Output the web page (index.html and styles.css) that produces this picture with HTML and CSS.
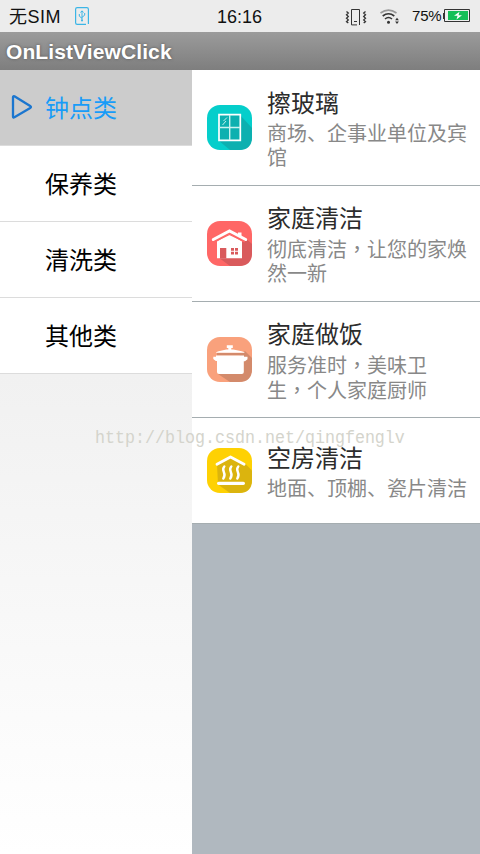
FILE: index.html
```
<!DOCTYPE html>
<html lang="zh-CN">
<head>
<meta charset="utf-8">
<title>OnListViewClick</title>
<link rel="stylesheet" href="styles.css">
</head>
<body>
<header class="status">
  <span class="carrier">无SIM</span>
  <svg class="usb" width="14" height="18" viewBox="0 0 14 18" fill="none" stroke="#3bb5e6"><path stroke-width="1.200" d="M13.400 17V2.200Q13.400.6 11.800.6H2.200Q.6.6.6 2.200v13.600q0 1.600 1.600 1.600H11"/><path d="M7 4v10M4.300 7v2.200L7 11.300M9.700 6v2.200L7 10.300M5.500 5.500 7 3.800l1.500 1.700"/><circle cx="7" cy="13.500" r="1" fill="#3bb5e6" stroke="none"/></svg>
  <span class="clock">16:16</span>
  <div class="indicators">
    <svg class="vibrate" width="22" height="18" viewBox="0 0 22 18" fill="none" stroke="#333"><path d="M14.500 17V1.500h-8v15.400H12M9 13.500h3" /><path stroke-width="1.300" d="M1.500 3.500l1.800 1.600-1.800 1.700 1.800 1.700-1.800 1.700 1.800 1.700-1.800 1.700 1.800 1.500M20.500 3.500l-1.800 1.600 1.800 1.700-1.800 1.700 1.800 1.700-1.800 1.700 1.800 1.700-1.800 1.500"/></svg>
    <svg class="wifi" width="20" height="16" viewBox="0 0 20 16" fill="none" stroke="#333" stroke-width="1.600"><path stroke="#999" d="M.5 4Q8.500-1.700 16.500 4"/><path d="M2.700 7Q8.500 2.500 14.300 7M5 10q3.500-3 7 0"/><circle cx="8.500" cy="13.200" r="1.500" fill="#333" stroke="none"/><path fill="#333" stroke="none" d="m17 8.800 1.900 2.500h-3.800zM17 15l1.900-2.500h-3.800z"/></svg>
    <span class="percent">75%</span>
    <svg class="battery" width="28" height="14" viewBox="0 0 28 14"><path fill="#333" d="M0 4h1.500v6H0z"/><path fill="#eee" stroke="#333" d="M1.500.500h25v12h-25z"/><path fill="#15bf57" d="M5 2h20v9H5z"/><path fill="#fff" d="m16.500 2.800-5.500 4h3.600l-1.100 3.700 5.500-4.200h-3.500z"/></svg>
  </div>
</header>
<h1 class="titlebar">OnListViewClick</h1>
<main class="content">
  <nav class="categories">
    <div class="category selected"><svg class="arrow" width="22" height="26" viewBox="0 0 22 26"><path fill="none" stroke="#1b76cf" stroke-width="2.300" stroke-linejoin="round" d="M2 3.500v19q0 1.500 1.400.7L19.200 14q1.500-1 0-2L3.400 2.300Q2 1.600 2 3.500z"/></svg>钟点类</div>
    <div class="category">保养类</div>
    <div class="category">清洗类</div>
    <div class="category">其他类</div>
  </nav>
  <section class="services">
    <article class="service">
      <svg class="icon" viewBox="0 0 45 45"><rect width="45" height="45" rx="13" fill="#05cecb"/><path fill="#0cb0b0" d="M33 10l12 13v9q0 13-13 13h-9L11 35z"/><path fill="#0cb0b0" stroke="#fff" stroke-width="1.700" d="M12 9.700h21.300v25.600H12z"/><path stroke="#c8f2f0" stroke-width="1.400" d="M22.700 10v25M12 22.500h21"/><path stroke="#d5f7f5" stroke-width=".9" d="m16.500 16 3.500-3.500M15.500 20l3.500-4"/></svg>
      <div class="text"><h2>擦玻璃</h2><p>商场、企事业单位及宾馆</p></div>
    </article>
    <article class="service">
      <svg class="icon" viewBox="0 0 45 45"><rect width="45" height="45" rx="13" fill="#ff6766"/><path fill="#d95a5c" d="M39.500 18 45 23v9q0 13-13 13h-9L11.500 36.500z"/><path fill="#fff" d="M10 20.500 22.500 13 35 20.500v16.700H10z"/><path fill="#d95a5c" d="M13 27h6.300v10.500H13zM24 27h3v2.700h-3zM28 27h3v2.700h-3zM24 30.700h3v2.700h-3zM28 30.700h3v2.700h-3z"/><path fill="none" stroke="#ff6766" stroke-width="1.200" d="M7 21 22.500 13.500 38 21"/><path fill="none" stroke="#fff" stroke-width="3" stroke-linecap="round" d="M6.300 18.500 22.500 10l16.200 8.500"/><path fill="#fff" d="M31 11.500h3.500v5L31 14.500z"/></svg>
      <div class="text"><h2>家庭清洁</h2><p>彻底清洁<span class="comma" lang="zh-TW">，</span>让您的家焕然一新</p></div>
    </article>
    <article class="service">
      <svg class="icon" viewBox="0 0 45 45"><rect width="45" height="45" rx="13" fill="#f9a17c"/><path fill="#d38a6b" d="M38 14l7 7v11q0 13-13 13h-9l-12-8z"/><path fill="#d38a6b" d="M10 16h27v2.500H10z"/><path fill="#fff" d="M8.800 15.800q.5-1.500 10.500-3.400h2v-1.400h-1.500V8.300h6V11h-1.500v1.400h2q11 1.900 11.500 3.400zM9 18.500h28v1.200h3.500v2.500l-2.500 2h-1.200V35q0 2-2 2H12q-2 0-2-2V24H8.800l-2.500-2v-2.300H9z"/></svg>
      <div class="text"><h2>家庭做饭</h2><p>服务准时<span class="comma" lang="zh-TW">，</span>美味卫<br>生<span class="comma" lang="zh-TW">，</span>个人家庭厨师</p></div>
    </article>
    <article class="service last">
      <svg class="icon" viewBox="0 0 45 45"><rect width="45" height="45" rx="13" fill="#fed103"/><path fill="#dbb40e" d="M10 16.500 23.500 9 38 15.500l7 7V32q0 13-13 13h-9L11 36.500z"/><path fill="none" stroke="#fff" stroke-width="2.800" stroke-linecap="round" stroke-linejoin="round" d="M10 16.300 23.500 9l13.600 7.300"/><path stroke="#fff" stroke-width="3.200" stroke-linecap="round" d="M11.600 35.300h24.800"/><path fill="none" stroke="#fff" stroke-width="2.400" stroke-linecap="round" d="M17.300 18.500c-4 4.500 3.200 6.500-1 12M24.300 18.500c-4 4.500 3.200 6.500-1 12M31.300 18.500c-4 4.500 3.200 6.500-1 12"/></svg>
      <div class="text"><h2>空房清洁</h2><p>地面、顶棚、瓷片清洁</p></div>
    </article>
  </section>
</main>
<div class="watermark">http://blog.csdn.net/qingfenglv</div>
</body>
</html>
```
FILE: styles.css
```
* { box-sizing: border-box; }
body {
  margin: 0;
  width: 480px;
  height: 854px;
  overflow: hidden;
  display: flex;
  flex-direction: column;
  position: relative;
  font-family: "Liberation Sans", "Noto Sans CJK SC", sans-serif;
  background: #fff;
}
.status {
  height: 32px;
  flex: none;
  display: grid;
  grid-template-columns: auto auto 1fr auto;
  align-items: center;
  padding: 0 9px;
  background: #ececec;
  color: #111;
  font-size: 18px;
  line-height: 32px;
}
.carrier { width: 66px; white-space: nowrap; letter-spacing: .5px; }
.usb { margin-top: -1px; }
.clock { padding-left: 128px; padding-top: 1px; }
.indicators { display: flex; align-items: center; font-size: 15px; }
.vibrate { margin: 1px 13px 0 0; }
.wifi { margin: 0 12px 0 0; }
.percent { width: 30px; letter-spacing: -.2px; margin-top: -1px; }
.battery { margin: -1px 0 0 1px; }
.titlebar {
  height: 38px;
  flex: none;
  margin: 0;
  padding: 1px 6px 0;
  font-size: 21px;
  line-height: 38px;
  letter-spacing: .1px;
  color: #fff;
  text-shadow: 0 0 3px #555;
  background: linear-gradient(#9b9b9b, #7e7e7e);
}
.content { flex: 1; display: flex; min-height: 0; }
.categories { width: 192px; background: linear-gradient(#f1f1f1 39%, #fff); }
.category {
  height: 76px;
  display: flex;
  align-items: center;
  position: relative;
  padding: 0 0 3px 45px;
  border-bottom: 1px solid #dcdcdc;
  background: #fff;
  color: #000;
  font-size: 24px;
}
.selected { background: #ccc; color: #189cf8; }
.arrow { position: absolute; left: 11px; top: 24px; }
.services { flex: 1; background: #b0b8bf; }
.service {
  height: 116px;
  display: flex;
  align-items: center;
  padding: 0 12px 0 15px;
  border-bottom: 1px solid #a5adb0;
  background: #fff;
}
.last { height: 106px; }
.icon { width: 45px; height: 45px; flex: none; margin-right: 15px; }
.text { flex: 1; padding-top: 3px; }
.text h2 {
  position: relative;
  z-index: 2;
  margin: 0 0 3px;
  font-size: 24px;
  line-height: 30px;
  font-weight: 400;
  color: #2c2c2c;
}
.text p { margin: 0; font-size: 20px; line-height: 24px; color: #888; }
.comma { font-family: "Noto Sans CJK TC", sans-serif; }
.watermark {
  position: absolute;
  left: 95px;
  top: 428px;
  z-index: 1;
  font: 16.66px/22px "Liberation Mono", monospace;
  color: #d4d4cc;
  transform: scaleY(1.1);
}
```
